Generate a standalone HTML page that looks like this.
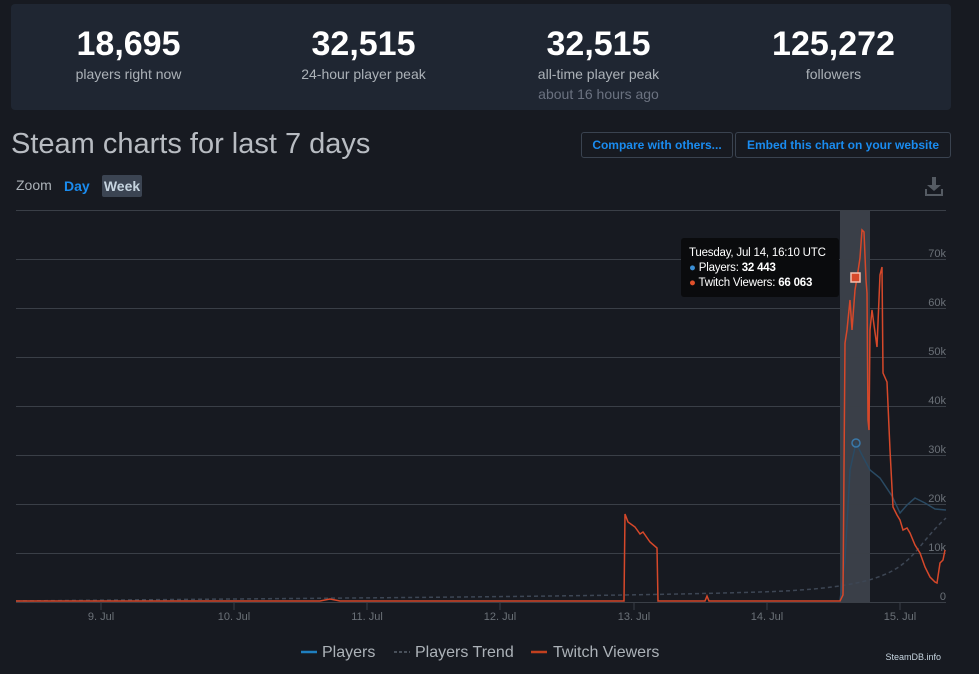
<!DOCTYPE html>
<html><head><meta charset="utf-8"><style>
*{margin:0;padding:0;box-sizing:border-box}
body{width:979px;height:674px;background:#171a21;font-family:"Liberation Sans",sans-serif;color:#c6d4df;position:relative;overflow:hidden}
.stats{position:absolute;left:11px;top:4px;width:940px;height:106px;background:#1f2632;border-radius:4px}
.st{position:absolute;top:20px;width:235px;text-align:center}
.st b{display:block;font-size:34px;color:#fff;font-weight:bold;line-height:40px}
.st span{display:block;font-size:14px;color:#acb2b8;line-height:20px}
.st .s2{color:#6b7280}
h1{position:absolute;left:11px;top:128px;font-size:29px;font-weight:normal;color:#b8bcc2}
.btn{position:absolute;top:132px;height:26px;border:1px solid #3a4350;border-radius:3px;color:#1a8cf0;font-size:12px;font-weight:bold;line-height:24px;text-align:center}
.zoom{position:absolute;left:16px;top:177px;font-size:14px;color:#acb2b8}
.day{position:absolute;left:64px;top:178px;font-size:14px;color:#1a8cf0;font-weight:bold}
.week{position:absolute;left:102px;top:175px;width:40px;height:22px;background:#3b4452;border-radius:2px;font-size:14px;color:#c6d4df;font-weight:bold;text-align:center;line-height:22px}
.tip{position:absolute;left:681px;top:238px;width:158px;height:59px;background:#0a0b0d;border-radius:3px;font-size:11.5px;color:#fff;padding:8px 8px;line-height:15px;white-space:nowrap;letter-spacing:-0.2px}
</style></head><body>
<div class="stats">
<div class="st" style="left:0"><b>18,695</b><span>players right now</span></div>
<div class="st" style="left:235px"><b>32,515</b><span>24-hour player peak</span></div>
<div class="st" style="left:470px"><b>32,515</b><span>all-time player peak</span><span class="s2">about 16 hours ago</span></div>
<div class="st" style="left:705px"><b>125,272</b><span>followers</span></div>
</div>
<h1>Steam charts for last 7 days</h1>
<div class="btn" style="left:581px;width:152px">Compare with others...</div>
<div class="btn" style="left:735px;width:216px">Embed this chart on your website</div>
<div class="zoom">Zoom</div><div class="day">Day</div><div class="week">Week</div>
<svg style="position:absolute;left:0;top:0" width="979" height="674">
<g fill="#555b63"><rect x="932" y="177" width="4" height="9"/><path d="M927 185 L941 185 L934 191Z"/><rect x="925" y="189" width="2" height="7"/><rect x="941" y="189" width="2" height="7"/><rect x="925" y="194" width="18" height="2"/></g>
<rect x="840" y="210" width="30" height="392" fill="#3a3f48"/>
<g stroke="#3a3f47" stroke-width="1">
<line x1="16" y1="210.5" x2="946" y2="210.5"/><line x1="16" y1="259.5" x2="946" y2="259.5"/><line x1="16" y1="308.5" x2="946" y2="308.5"/><line x1="16" y1="357.5" x2="946" y2="357.5"/><line x1="16" y1="406.5" x2="946" y2="406.5"/><line x1="16" y1="455.5" x2="946" y2="455.5"/><line x1="16" y1="504.5" x2="946" y2="504.5"/><line x1="16" y1="553.5" x2="946" y2="553.5"/><line x1="16" y1="602.5" x2="946" y2="602.5"/>
<line x1="101" y1="602" x2="101" y2="610"/><line x1="234" y1="602" x2="234" y2="610"/><line x1="367" y1="602" x2="367" y2="610"/><line x1="500" y1="602" x2="500" y2="610"/><line x1="634" y1="602" x2="634" y2="610"/><line x1="767" y1="602" x2="767" y2="610"/><line x1="900" y1="602" x2="900" y2="610"/>
</g>
<g fill="#6b7178" font-size="11" text-anchor="end" font-family="Liberation Sans">
<text x="946" y="257">70k</text><text x="946" y="306">60k</text><text x="946" y="355">50k</text><text x="946" y="404">40k</text><text x="946" y="453">30k</text><text x="946" y="502">20k</text><text x="946" y="551">10k</text><text x="946" y="600">0</text>
</g>
<g fill="#6b7178" font-size="11" text-anchor="middle" font-family="Liberation Sans">
<text x="101" y="620">9. Jul</text><text x="234" y="620">10. Jul</text><text x="367" y="620">11. Jul</text><text x="500" y="620">12. Jul</text><text x="634" y="620">13. Jul</text><text x="767" y="620">14. Jul</text><text x="900" y="620">15. Jul</text>
</g>
<path d="M16 601 C300 598 600 597 760 592 S900 560 946 518" fill="none" stroke="#3d4654" stroke-width="1.5" stroke-dasharray="4 3"/>
<path d="M840 601 L845 560 L850 470 L856 443 L862 455 L870 470 L880 478 L892 496 L900 513 L907 505 L915 498 L925 503 L935 509 L946 510" fill="none" stroke="#2a4a63" stroke-width="1.5"/>
<path d="M16 601 L320 601 L330 599 L340 601 L624 601 L625 514 L628 522 L635 527 L640 534 L643 532 L650 542 L657 548 L658 601 L705 601 L707 596 L709 601 L840 601 L843 595 L845 343 L847 330 L850 300 L852 330 L855 290 L857 278 L860 258 L862 230 L864 232 L866 280 L867 293 L868 420 L869 430 L870 330 L872 310 L874 325 L877 347 L880 275 L882 267 L883 373 L887 382 L890 450 L893 507 L897 515 L900 520 L903 530 L907 528 L910 533 L915 545 L920 553 L925 567 L930 577 L935 582 L937 583 L940 563 L943 560 L945 550" fill="none" stroke="#d6482a" stroke-width="1.5"/>
<circle cx="856" cy="443" r="4" fill="none" stroke="#3a78a8" stroke-width="1.5"/>
<rect x="851" y="273" width="9" height="9" fill="#d6482a" stroke="#f3c0b0" stroke-width="1.5"/>
<line x1="301" y1="652" x2="317" y2="652" stroke="#1f7fbf" stroke-width="2.5"/>
<line x1="394" y1="652" x2="410" y2="652" stroke="#5a626d" stroke-width="1.5" stroke-dasharray="3 2"/>
<line x1="531" y1="652" x2="547" y2="652" stroke="#c2401f" stroke-width="2.5"/>
<g fill="#acb2b8" font-size="16" font-family="Liberation Sans"><text x="322" y="657">Players</text><text x="415" y="657">Players Trend</text><text x="553" y="657">Twitch Viewers</text></g>
<text x="941" y="660" fill="#c6d4df" font-size="9" text-anchor="end" font-family="Liberation Sans">SteamDB.info</text>
</svg>
<div class="tip">Tuesday, Jul 14, 16:10 UTC<br><span style="color:#3a8ed4">●</span> Players: <b>32 443</b><br><span style="color:#e0502a">●</span> Twitch Viewers: <b>66 063</b></div>
</body></html>
